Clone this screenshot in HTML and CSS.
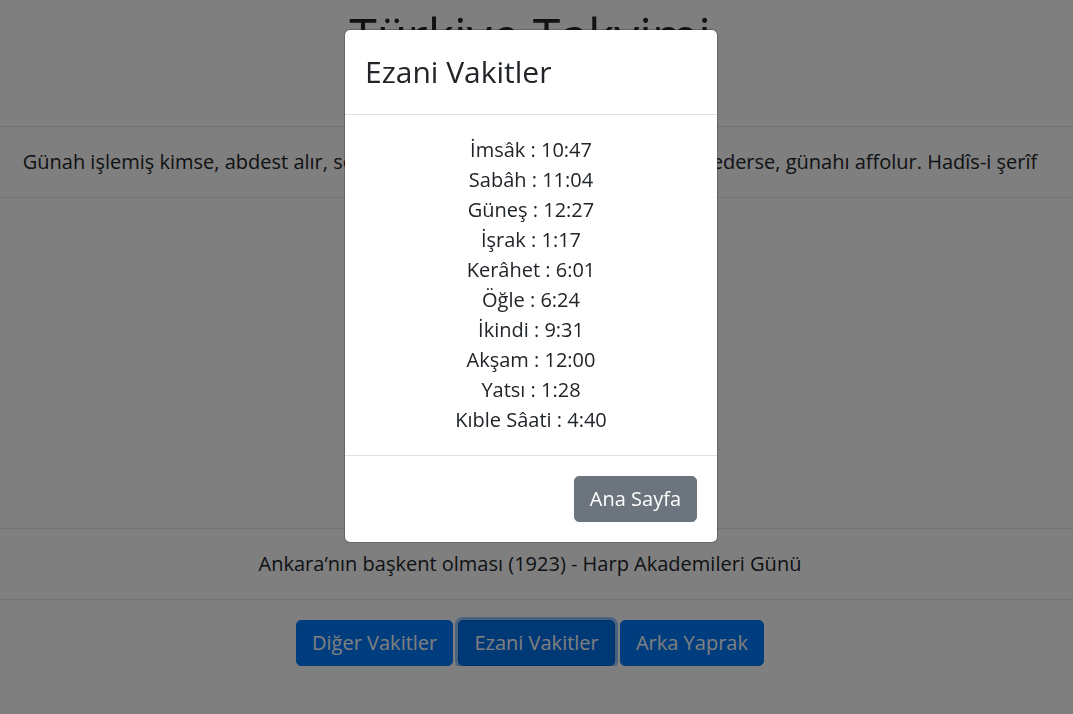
FILE: index.html
```html
<!DOCTYPE html>
<html lang="tr">
<head>
<meta charset="utf-8">
<title>Türkiye Takvimi</title>
<link rel="stylesheet" href="styles.css">
</head>
<body>
<main class="page">
  <h1 class="title">Türkiye Takvimi</h1>
  <p class="date">&nbsp;</p>
  <div class="band">Günah işlemiş kimse, abdest alır, sonra namaz kılıp, Allahü teâlâya istiğfar ederse, günahı affolur. Hadîs-i şerîf</div>
  <div class="spacer"></div>
  <div class="band">Ankara’nın başkent olması (1923) - Harp Akademileri Günü</div>
  <div class="actions">
    <button class="btn btn-primary">Diğer Vakitler</button>
    <button class="btn btn-primary is-focus">Ezani Vakitler</button>
    <button class="btn btn-primary">Arka Yaprak</button>
  </div>
</main>

<div class="backdrop"></div>

<div class="modal">
  <div class="modal-content">
    <div class="modal-header">
      <h4 class="modal-title">Ezani Vakitler</h4>
    </div>
    <div class="modal-body">
      <div>İmsâk : 10:47</div>
      <div>Sabâh : 11:04</div>
      <div>Güneş : 12:27</div>
      <div>İşrak : 1:17</div>
      <div>Kerâhet : 6:01</div>
      <div>Öğle : 6:24</div>
      <div>İkindi : 9:31</div>
      <div>Akşam : 12:00</div>
      <div>Yatsı : 1:28</div>
      <div>Kıble Sâati : 4:40</div>
    </div>
    <div class="modal-footer">
      <button class="btn btn-secondary">Ana Sayfa</button>
    </div>
  </div>
</div>
</body>
</html>
```

FILE: styles.css
```css
html, body {
  margin: 0;
  padding: 0;
}

body {
  font-family: "Open Sans", "Liberation Sans", sans-serif;
  font-size: 20px;
  line-height: 1.5;
  color: #212529;
  background: #fff;
  text-align: center;
  overflow: hidden;
}

.page {
  display: flex;
  flex-direction: column;
  padding-right: 13px;
}

.title {
  margin: 5px 0 0;
  font-size: 50px;
  font-weight: 500;
  line-height: 1.2;
}

.date {
  margin: 6px 0 25px;
}

.band {
  border-top: 1px solid #dee2e6;
  border-bottom: 1px solid #dee2e6;
  margin-right: -13px;
  padding: 20px 13px 20px 0;
  white-space: nowrap;
}

.spacer {
  height: 330px;
}

.actions {
  margin-top: 20px;
}

.btn {
  display: inline-block;
  font-family: inherit;
  font-size: 20px;
  line-height: 1.5;
  padding: 7px 15px;
  border: 1px solid transparent;
  border-radius: 5px;
  cursor: pointer;
  vertical-align: middle;
}

.btn-primary {
  background: #007bff;
  border-color: #007bff;
  color: #fff;
}

.btn-primary.is-focus {
  background: #0072ec;
  border-color: #0062cc;
  box-shadow: 0 0 0 3px rgba(38, 143, 255, 0.5);
}

.btn-secondary {
  background: #6c757d;
  border-color: #6c757d;
  color: #fff;
}

.backdrop {
  position: fixed;
  inset: 0;
  background: rgba(0, 0, 0, 0.5);
}

.modal {
  position: fixed;
  inset: 0;
  display: flex;
  justify-content: center;
  align-items: flex-start;
  padding-right: 11px;
}

.modal-content {
  width: 374px;
  margin-top: 29px;
  box-sizing: border-box;
  background: #fff;
  border: 1px solid rgba(0, 0, 0, 0.2);
  border-radius: 6px;
  background-clip: padding-box;
  display: flex;
  flex-direction: column;
}

.modal-header {
  padding: 20px;
  border-bottom: 1px solid #dee2e6;
  text-align: left;
}

.modal-title {
  margin: 0;
  font-size: 30px;
  font-weight: 400;
  line-height: 44px;
}

.modal-body {
  padding: 20px;
  text-align: center;
}

.modal-footer {
  display: flex;
  justify-content: flex-end;
  padding: 20px;
  border-top: 1px solid #dee2e6;
}
```
